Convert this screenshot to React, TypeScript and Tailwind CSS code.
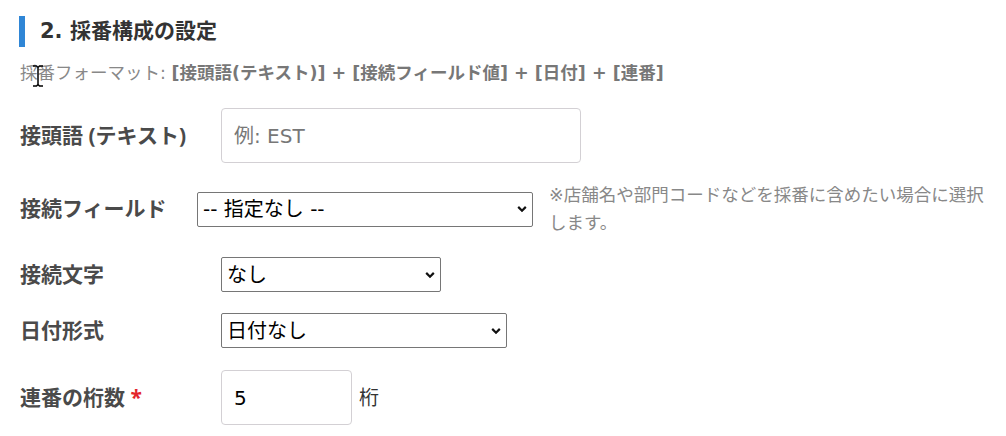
import React from "react";

// Latin glyphs in the capture are Verdana-like (Meiryo), DejaVu Sans is the closest
const font = { fontFamily: '"DejaVu Sans", "Noto Sans CJK JP", sans-serif' };
const labelFont = { fontFamily: '"Open Sans", "Noto Sans CJK JP", sans-serif' };

function Chevron() {
    return (
        <svg
            width="10"
            height="7"
            viewBox="0 0 10 7"
            className="pointer-events-none absolute right-[6px] top-1/2 -translate-y-1/2"
        >
            <path d="M1.2 1.4 L5 5.2 L8.8 1.4" fill="none" stroke="#111" strokeWidth="2.2" />
        </svg>
    );
}

function Select({ value, width }: { value: string; width: string }) {
    return (
        <div className={`relative ${width}`}>
            <select
                defaultValue={value}
                className="h-[35px] w-full appearance-none rounded-[2px] border border-[#767676] bg-white pl-[5px] pr-6 text-[20px] leading-none text-black outline-none"
                style={font}
            >
                <option>{value}</option>
            </select>
            <Chevron />
        </div>
    );
}

function Label({ children, width = "w-[201px]" }: { children: React.ReactNode; width?: string }) {
    return (
        <label className={`${width} shrink-0 text-[21px] font-bold text-[#4a4a4a]`} style={labelFont}>
            {children}
        </label>
    );
}

export default function App() {
    return (
        <div className="relative h-[436px] w-[1006px] bg-white pl-[20px] pt-[16px]" style={font}>
            <div className="-ml-px flex h-[31px] items-center border-l-[6px] border-[#2f86d6] pl-[15px]">
                <h2 className="text-[21px] font-bold text-[#333]">2. 採番構成の設定</h2>
            </div>

            <p className="mt-[13px] text-[17.5px] leading-[26px] text-[#888]">
                採番フォーマット:{" "}
                <span className="font-bold text-[#777]">
                    [接頭語(テキスト)] + [接続フィールド値] + [日付] + [連番]
                </span>
            </p>

            <div className="mt-[22px] flex items-center">
                <Label>接頭語 (テキスト)</Label>
                <input
                    placeholder="例: EST"
                    className="h-[55px] w-[360px] rounded-[4px] border border-[#d3d0d4] px-[12px] text-[20px] text-black outline-none placeholder:text-[#777]"
                    style={font}
                />
            </div>

            <div className="mt-[18px] flex items-center">
                <Label width="w-[177px]">接続フィールド</Label>
                <Select value="-- 指定なし --" width="w-[336px]" />
                <p className="ml-[16px] w-[440px] text-[17.5px] leading-[28px] text-[#888]">
                    ※店舗名や部門コードなどを採番に含めたい場合に選択します。
                </p>
            </div>

            <div className="mt-[20px] flex items-center">
                <Label>接続文字</Label>
                <Select value="なし" width="w-[220px]" />
            </div>

            <div className="mt-[21px] flex items-center">
                <Label>日付形式</Label>
                <Select value="日付なし" width="w-[286px]" />
            </div>

            <div className="mt-[22px] flex items-center">
                <Label>
                    連番の桁数 <span className="text-[#e3262c]">*</span>
                </Label>
                <input
                    defaultValue="5"
                    className="h-[55px] w-[131px] rounded-[4px] border border-[#d3d0d4] px-[12px] text-[20px] text-black outline-none"
                    style={font}
                />
                <span className="ml-[7px] text-[20px] text-[#333]">桁</span>
            </div>

            {/* mouse cursor left in the capture */}
            <svg width="12" height="22" viewBox="0 0 12 22" className="absolute left-[32px] top-[65px]">
                <path d="M1 1 H4.5 L6 2.5 L7.5 1 H11 M6 2.5 V19.5 M1 21 H4.5 L6 19.5 L7.5 21 H11" fill="none" stroke="#000" strokeWidth="1.5" />
            </svg>
        </div>
    );
}
